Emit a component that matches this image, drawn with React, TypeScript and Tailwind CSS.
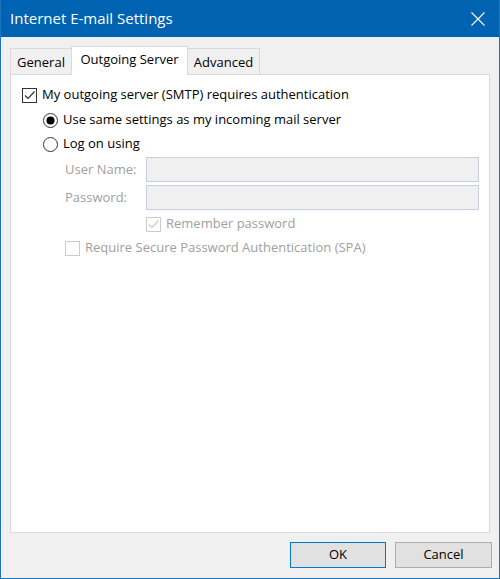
import React from "react";

const font = { fontFamily: '"Open Sans", "Noto Sans", sans-serif' };

function Check({ disabled }: { disabled?: boolean }) {
  const c = disabled ? "#cccccc" : "#333333";
  return (
    <svg width="15" height="15" viewBox="0 0 15 15" className="shrink-0">
      <rect x="0.5" y="0.5" width="14" height="14" fill="#ffffff" stroke={c} />
      <path d="M3 7.5 L6 10.5 L12.5 3.5" fill="none" stroke={c} strokeWidth="1.2" />
    </svg>
  );
}

function EmptyBox({ disabled }: { disabled?: boolean }) {
  const c = disabled ? "#cccccc" : "#333333";
  return (
    <svg width="15" height="15" viewBox="0 0 15 15" className="shrink-0">
      <rect x="0.5" y="0.5" width="14" height="14" fill="#ffffff" stroke={c} />
    </svg>
  );
}

function Radio({ checked }: { checked?: boolean }) {
  return (
    <svg width="15" height="15" viewBox="0 0 15 15" className="shrink-0">
      <circle cx="7.5" cy="7.5" r="7" fill="#ffffff" stroke="#333333" />
      {checked && <circle cx="7.5" cy="7.5" r="4" fill="#000000" />}
    </svg>
  );
}

export default function App() {
  return (
    <div
      className="w-[500px] h-[579px] flex flex-col border border-t-0 border-[#1c75c0] bg-[#f0f0f0] text-[13px] text-black"
      style={font}
    >
      <div className="h-[37px] shrink-0 bg-[#0063b1] flex items-center justify-between pl-[9px] pr-[14px]">
        <span className="text-white text-[15px] leading-none">Internet E-mail Settings</span>
        <svg width="14" height="14" viewBox="0 0 14 14">
          <path d="M0.5 0.5 L13.5 13.5 M13.5 0.5 L0.5 13.5" stroke="#ffffff" strokeWidth="1.1" />
        </svg>
      </div>

      <div className="flex-1 flex flex-col">
        <div className="mt-[9px] ml-[9px] flex items-end h-[28px]">
          <div className="w-[61px] h-[26px] border border-b-0 border-r-0 border-[#d9d9d9] bg-[#f0f0f0] flex items-center justify-center pt-[2px]">
            General
          </div>
          <div className="relative z-10 w-[117px] h-[29px] -mb-px border border-b-0 border-[#d9d9d9] bg-white flex items-center justify-center pb-[2px]">
            Outgoing Server
          </div>
          <div className="w-[72px] h-[26px] border border-b-0 border-l-0 border-[#d9d9d9] bg-[#f0f0f0] flex items-center justify-center pt-[2px]">
            Advanced
          </div>
        </div>

        <div className="flex-1 mx-[9px] border border-[#d9d9d9] bg-white flex flex-col">
          <div className="mt-[12px] pl-[11px] h-[16px] flex items-center gap-[5px]">
            <Check />
            <span>My outgoing server (SMTP) requires authentication</span>
          </div>
          <div className="mt-[9px] pl-[32px] h-[16px] flex items-center gap-[5px]">
            <Radio checked />
            <span>Use same settings as my incoming mail server</span>
          </div>
          <div className="mt-[8px] pl-[32px] h-[16px] flex items-center gap-[5px]">
            <Radio />
            <span>Log on using</span>
          </div>
          <div className="mt-[5px] pl-[54px] pr-[10px] flex items-center text-[#a0a0a0]">
            <span className="w-[81px] shrink-0">User Name:</span>
            <div className="flex-1 h-[25px] border border-[#c5d0dc] bg-[#f0f0f0]" />
          </div>
          <div className="mt-[3px] pl-[54px] pr-[10px] flex items-center text-[#a0a0a0]">
            <span className="w-[81px] shrink-0">Password:</span>
            <div className="flex-1 h-[25px] border border-[#c5d0dc] bg-[#f0f0f0]" />
          </div>
          <div className="mt-[6px] pl-[135px] h-[16px] flex items-center gap-[5px] text-[#a0a0a0]">
            <Check disabled />
            <span>Remember password</span>
          </div>
          <div className="mt-[8px] pl-[54px] h-[16px] flex items-center gap-[5px] text-[#a0a0a0]">
            <EmptyBox disabled />
            <span>Require Secure Password Authentication (SPA)</span>
          </div>
        </div>

        <div className="mt-[9px] mb-[10px] pr-[7px] flex justify-end gap-[9px]">
          <button className="w-[96px] h-[26px] border border-[#0078d7] bg-[#e1e1e1] flex items-center justify-center">
            OK
          </button>
          <button className="w-[97px] h-[26px] border border-[#adadad] bg-[#e1e1e1] flex items-center justify-center">
            Cancel
          </button>
        </div>
      </div>
    </div>
  );
}
